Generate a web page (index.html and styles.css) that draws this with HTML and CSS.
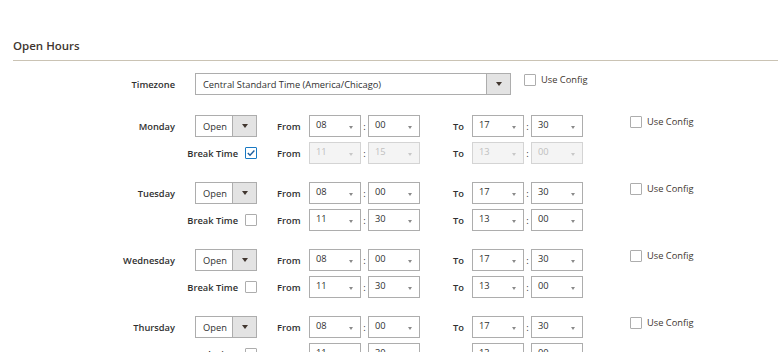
FILE: index.html
```html
<!DOCTYPE html>
<html lang="en">
  <head>
    <meta charset="UTF-8" />
    <meta name="viewport" content="width=device-width, initial-scale=1.0" />
    <title>Open Hours</title>
    <link rel="stylesheet" href="styles.css">
  </head>
  <body>
    <div class="page">
      <div class="section">
        <div class="section-title">Open Hours</div>
        <div class="form">
          <div class="row timezone-row">
            <div class="label">Timezone</div>
            <div class="select select-timezone">
              <span class="select-value">Central Standard Time (America/Chicago)</span>
              <span class="select-btn"></span>
            </div>
            <label class="use-config tz-config"><span class="checkbox"></span>Use Config</label>
          </div>

          <!-- Monday -->
          <div class="day">
            <div class="row">
              <div class="label">Monday</div>
              <div class="select select-open">
                <span class="select-value">Open</span>
                <span class="select-btn"></span>
              </div>
              <div class="from">From</div>
              <div class="time">
                <div class="time-select"><span>08</span></div>
                <span class="colon">:</span>
                <div class="time-select"><span>00</span></div>
              </div>
              <div class="to">To</div>
              <div class="time">
                <div class="time-select"><span>17</span></div>
                <span class="colon">:</span>
                <div class="time-select"><span>30</span></div>
              </div>
              <label class="use-config day-config"><span class="checkbox"></span>Use Config</label>
            </div>
            <div class="row">
              <div class="break-cell">
                <span class="break-label">Break Time</span>
                <span class="checkbox checked">
                  <svg width="10" height="10" viewBox="0 0 10 10"><polyline points="1.8,5 4,7.2 8.4,2.6" fill="none" stroke="#1c5e9e" stroke-width="1.4"/></svg>
                </span>
              </div>
              <div class="from">From</div>
              <div class="time">
                <div class="time-select disabled"><span>11</span></div>
                <span class="colon">:</span>
                <div class="time-select disabled"><span>15</span></div>
              </div>
              <div class="to">To</div>
              <div class="time">
                <div class="time-select disabled"><span>13</span></div>
                <span class="colon">:</span>
                <div class="time-select disabled"><span>00</span></div>
              </div>
            </div>
          </div>

          <!-- Tuesday -->
          <div class="day">
            <div class="row">
              <div class="label">Tuesday</div>
              <div class="select select-open">
                <span class="select-value">Open</span>
                <span class="select-btn"></span>
              </div>
              <div class="from">From</div>
              <div class="time">
                <div class="time-select"><span>08</span></div>
                <span class="colon">:</span>
                <div class="time-select"><span>00</span></div>
              </div>
              <div class="to">To</div>
              <div class="time">
                <div class="time-select"><span>17</span></div>
                <span class="colon">:</span>
                <div class="time-select"><span>30</span></div>
              </div>
              <label class="use-config day-config"><span class="checkbox"></span>Use Config</label>
            </div>
            <div class="row">
              <div class="break-cell">
                <span class="break-label">Break Time</span>
                <span class="checkbox"></span>
              </div>
              <div class="from">From</div>
              <div class="time">
                <div class="time-select"><span>11</span></div>
                <span class="colon">:</span>
                <div class="time-select"><span>30</span></div>
              </div>
              <div class="to">To</div>
              <div class="time">
                <div class="time-select"><span>13</span></div>
                <span class="colon">:</span>
                <div class="time-select"><span>00</span></div>
              </div>
            </div>
          </div>

          <!-- Wednesday -->
          <div class="day">
            <div class="row">
              <div class="label">Wednesday</div>
              <div class="select select-open">
                <span class="select-value">Open</span>
                <span class="select-btn"></span>
              </div>
              <div class="from">From</div>
              <div class="time">
                <div class="time-select"><span>08</span></div>
                <span class="colon">:</span>
                <div class="time-select"><span>00</span></div>
              </div>
              <div class="to">To</div>
              <div class="time">
                <div class="time-select"><span>17</span></div>
                <span class="colon">:</span>
                <div class="time-select"><span>30</span></div>
              </div>
              <label class="use-config day-config"><span class="checkbox"></span>Use Config</label>
            </div>
            <div class="row">
              <div class="break-cell">
                <span class="break-label">Break Time</span>
                <span class="checkbox"></span>
              </div>
              <div class="from">From</div>
              <div class="time">
                <div class="time-select"><span>11</span></div>
                <span class="colon">:</span>
                <div class="time-select"><span>30</span></div>
              </div>
              <div class="to">To</div>
              <div class="time">
                <div class="time-select"><span>13</span></div>
                <span class="colon">:</span>
                <div class="time-select"><span>00</span></div>
              </div>
            </div>
          </div>

          <!-- Thursday -->
          <div class="day">
            <div class="row">
              <div class="label">Thursday</div>
              <div class="select select-open">
                <span class="select-value">Open</span>
                <span class="select-btn"></span>
              </div>
              <div class="from">From</div>
              <div class="time">
                <div class="time-select"><span>08</span></div>
                <span class="colon">:</span>
                <div class="time-select"><span>00</span></div>
              </div>
              <div class="to">To</div>
              <div class="time">
                <div class="time-select"><span>17</span></div>
                <span class="colon">:</span>
                <div class="time-select"><span>30</span></div>
              </div>
              <label class="use-config day-config"><span class="checkbox"></span>Use Config</label>
            </div>
            <div class="row">
              <div class="break-cell">
                <span class="break-label">Break Time</span>
                <span class="checkbox"></span>
              </div>
              <div class="from">From</div>
              <div class="time">
                <div class="time-select"><span>11</span></div>
                <span class="colon">:</span>
                <div class="time-select"><span>30</span></div>
              </div>
              <div class="to">To</div>
              <div class="time">
                <div class="time-select"><span>13</span></div>
                <span class="colon">:</span>
                <div class="time-select"><span>00</span></div>
              </div>
            </div>
          </div>
        </div>
      </div>
    </div>
  </body>
</html>
```

FILE: styles.css
```css
* {
  padding: 0;
  margin: 0;
  box-sizing: border-box;
}
body {
  font-family: "Open Sans", "Liberation Sans", sans-serif;
  font-size: 9.3px;
  color: #303030;
  background: #fff;
}
.page {
  height: 352px;
  overflow: hidden;
  padding-top: 38px;
}
.section {
  margin-left: 13px;
}
.section-title {
  font-size: 11.5px;
  font-weight: 600;
  line-height: 16px;
  color: #41362f;
  padding-bottom: 6px;
  border-bottom: 1px solid #cac3b4;
}
.form {
  padding-top: 12px;
}
.row {
  display: flex;
  align-items: center;
  height: 22px;
}
.label {
  width: 162px;
  margin-right: 20px;
  text-align: right;
  font-weight: 600;
}

/* select with grey button */
.select {
  display: flex;
  align-items: center;
  height: 22px;
  border: 1px solid #adadad;
  background: #fff;
}
.select-value {
  flex: 1;
  padding-left: 7px;
  white-space: nowrap;
  overflow: hidden;
}
.select-btn {
  align-self: stretch;
  width: 24px;
  background: #e3e3e3;
  border-left: 1px solid #adadad;
  display: flex;
  align-items: center;
  justify-content: center;
}
.select-btn::after {
  content: "";
  border-left: 3px solid transparent;
  border-right: 3px solid transparent;
  border-top: 4px solid #41362f;
}
.select-timezone {
  width: 316px;
}
.select-open {
  width: 62px;
}

/* time selects */
.from {
  width: 32px;
  margin-left: 20px;
  font-weight: 600;
}
.to {
  width: 19px;
  margin-left: 33px;
  font-weight: 600;
}
.time {
  display: flex;
  align-items: center;
}
.time-select {
  position: relative;
  width: 52px;
  height: 22px;
  line-height: 18px;
  padding-left: 6px;
  border: 1px solid #adadad;
  background: #fff;
}
.time-select::after {
  content: "";
  position: absolute;
  right: 7px;
  top: 10px;
  border-left: 2px solid transparent;
  border-right: 2px solid transparent;
  border-top: 3px solid #8a8a8a;
}
.time-select.disabled {
  background: #f4f4f4;
  border-color: #d4d4d4;
  color: #c0c0c0;
}
.time-select.disabled::after {
  border-top-color: #c8c8c8;
}
.colon {
  width: 7px;
  text-align: center;
}

/* checkboxes */
.checkbox {
  display: inline-flex;
  align-items: center;
  justify-content: center;
  width: 12px;
  height: 12px;
  border: 1px solid #adadad;
  border-radius: 1px;
  background: #fff;
}
.checkbox.checked {
  border-color: #1979c3;
}
.use-config {
  display: flex;
  align-items: center;
  gap: 5px;
  align-self: flex-start;
  color: #41362f;
}
.tz-config {
  margin-left: 13px;
}
.day-config {
  margin-left: 47px;
}
.break-cell {
  width: 244px;
  display: flex;
  align-items: center;
  justify-content: flex-end;
  gap: 7px;
}
.break-label {
  font-weight: 600;
}

.day {
  margin-top: 20px;
}
.day .row + .row {
  margin-top: 5px;
}
.day + .day {
  margin-top: 18px;
}
```
